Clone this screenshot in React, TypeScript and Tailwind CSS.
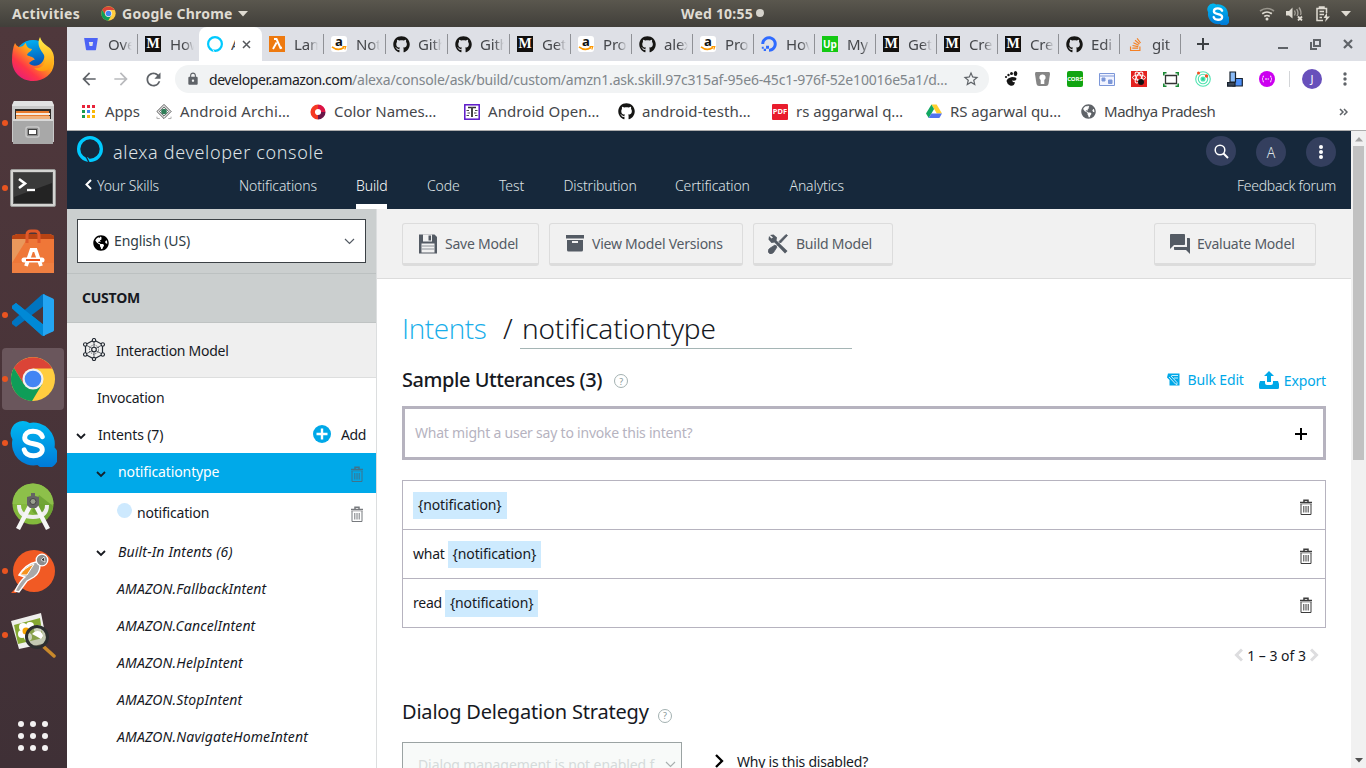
import type { ReactNode } from "react";
import { FaGithub, FaBitbucket, FaDigitalOcean, FaStackOverflow, FaGlobeAmericas } from "react-icons/fa";
import { MdQuestionAnswer, MdLock, MdStarBorder, MdArrowBack, MdArrowForward, MdRefresh } from "react-icons/md";

function ChromeLogo({ size }: { size: number }) {
  return (
    <svg width={size} height={size} viewBox="0 0 48 48">
      <circle cx="24" cy="24" r="23" fill="#ffcd40" />
      <path d="M24 13 L43.9 13 A23 23 0 0 0 4.1 12.5 L14.5 29.5 Z" fill="#db4437" />
      <path d="M4.1 12.5 A23 23 0 0 0 23 47 L33.5 29.5 L24 34 L14.5 29.5 Z" fill="#0f9d58" />
      <circle cx="24" cy="24" r="11" fill="#f1f1f1" />
      <circle cx="24" cy="24" r="8.7" fill="#4285f4" />
    </svg>
  );
}

function AlexaRing({ size, stroke, back }: { size: number; stroke: number; back: string }) {
  return (
    <svg width={size} height={size} viewBox="0 0 26 26" fill="none">
      <circle cx="13" cy="13" r={13 - stroke / 2} stroke="#00caff" strokeWidth={stroke} />
      <path d="M10.800 21 L14.500 26 L12 26.500 L9.800 21.500 Z" fill="#00caff" />
      <path d="M9.300 21 L12 26.500" stroke={back} strokeWidth="1.300" />
    </svg>
  );
}

function SkypeLogo({ size }: { size: number }) {
  return (
    <svg width={size} height={size} viewBox="0 0 48 48">
      <defs>
        <linearGradient id="sky" x1="0" y1="0" x2="0" y2="1">
          <stop offset="0" stopColor="#00b8f1" />
          <stop offset="1" stopColor="#0078d7" />
        </linearGradient>
      </defs>
      <path fill="url(#sky)" d="M13 1 A12.5 12.5 0 0 0 2.5 20 A22 22 0 0 0 28 46 A12.500 12.500 0 0 0 45.500 28 A22 22 0 0 0 20 3 A12.500 12.500 0 0 0 13 1 Z" />
      <path d="M33 17 C31 12 26 11.500 23.500 11.500 C18 11.500 15 14.500 15 18 C15 27 33 21.500 33 30.500 C33 34 29 36.500 24 36.500 C19 36.500 15.500 34 14.500 30.500" fill="none" stroke="#fff" strokeWidth="5" strokeLinecap="round" />
    </svg>
  );
}

const Firefox = () => (
  <svg width="44" height="46" viewBox="0 0 44 46">
    <defs>
      <linearGradient id="ffa" x1="1" y1="0" x2="0.1" y2="1">
        <stop offset="0" stopColor="#fff44f" />
        <stop offset=".4" stopColor="#ffa716" />
        <stop offset=".7" stopColor="#ff3647" />
        <stop offset="1" stopColor="#e31587" />
      </linearGradient>
      <linearGradient id="ffb" x1=".3" y1="0" x2=".5" y2="1">
        <stop offset="0" stopColor="#00b3f4" />
        <stop offset="1" stopColor="#0a2f9c" />
      </linearGradient>
      <linearGradient id="ffc" x1="0" y1="0" x2="0" y2="1">
        <stop offset="0" stopColor="#fff04a" />
        <stop offset="1" stopColor="#ff9a0c" />
      </linearGradient>
    </defs>
    <circle cx="22" cy="22" r="18" fill="url(#ffb)" />
    <path d="M4 7 C5 9 6 10 8 11 C10 11 11 10 12 10 C13 9 14 7 15 7 C15 10 18 13 21 13 C20 16 17 16 16 19 C19 21 22 20 24 24 C22 23 20 26 18 27 C21 31 28 31 32 25 C35 20 33 12 30 9 C40 12 44 20 43 28 C42 38 33 45 22 45 C10 45 1 36 1 24 C1 17 2 11 4 7 Z" fill="url(#ffa)" />
    <path d="M29 1 C25 9 30 14 33 19 C37 26 31 34 23 32 C31 39 43 34 43 22 C43 17 40 12 36 10 C33 8 30 5 29 1 Z" fill="url(#ffc)" />
  </svg>
);

const Files = () => (
  <svg width="44" height="46" viewBox="0 0 44 46">
    <path d="M3 1 H41 L43 5 V42 H1 V5 Z" fill="#c9c9c9" />
    <path d="M3 1 H41 L43 6 H1 Z" fill="#e2e2e2" />
    <path d="M4 9 H40 V20 H4 Z" fill="#2e2b28" />
    <path d="M5 11 H38 V19 H5 Z" fill="#e87a2b" />
    <path d="M5 13 H39 V15 H5 Z" fill="#f6e9dd" />
    <path d="M5 16 H39 V19 H5 Z" fill="#f0b27c" />
    <path d="M2 19 H42 V44 H2 Z" fill="#a8a8a8" />
    <path d="M2 19 H42 V21 H2 Z" fill="#d8d8d8" />
    <rect x="15" y="27" width="13" height="10" rx="2" fill="#8e8e8e" stroke="#c9c9c9" strokeWidth="1.500" />
    <rect x="17.500" y="29.500" width="8" height="5" fill="#fff" stroke="#444" />
  </svg>
);

const Terminal = () => (
  <svg width="46" height="38" viewBox="0 0 46 38">
    <rect x=".5" y=".5" width="45" height="37" rx="1.500" fill="#d4d4d2" stroke="#9a9a98" />
    <rect x="3.500" y="3.500" width="39" height="31" fill="#232323" stroke="#555" />
    <path d="M4 4 H42 V14 L4 28 Z" fill="#3a3a3a" />
    <path d="M9 10 L15 14.500 L9 19" fill="none" stroke="#fff" strokeWidth="2.600" />
    <path d="M17 21 H25" stroke="#fff" strokeWidth="2.300" />
  </svg>
);

const Software = () => (
  <svg width="44" height="46" viewBox="0 0 44 46">
    <path d="M1 7 L6 5 H39 L43 7 V44 H1 Z" fill="#f0803c" />
    <path d="M1 7 L6 5 H39 L43 7 V11 H1 Z" fill="#b84313" />
    <path d="M1 10 H43 V34 H1 Z" fill="#ef7738" />
    <path d="M1 10 H16 L1 34 Z" fill="#e9985c" />
    <path d="M1 34 H43 V44 H1 Z" fill="#ef7f41" />
    <path d="M16 14 V6 Q16 2 20 2 H24 Q28 2 28 6 V14" fill="none" stroke="#e0592a" strokeWidth="3" />
    <path d="M15 37 L20.500 21 H24.500 L30 37" fill="none" stroke="#fff" strokeWidth="3.800" />
    <path d="M13 31 H31" stroke="#fff" strokeWidth="5" strokeLinecap="round" />
    <path d="M15 31 H29" stroke="#e95420" strokeWidth="2" />
  </svg>
);

const VsCode = () => (
  <svg width="44" height="44" viewBox="0 0 44 44">
    <path d="M1 13 L5 10 L34 33 V43 L31 42.500 L1 15.500 Z" fill="#0089d6" />
    <path d="M1 31 L5 34 L34 12 V1 L31 1.500 L1 28.500 Z" fill="#0074c0" />
    <path d="M1 13 L5 10 L34 33 V43 L31 42.500 L12 25.500 Z" fill="#0089d6" />
    <path d="M32 1 L42 5.500 Q43 6 43 7 V37 Q43 38 42 38.500 L32 43 Z" fill="#24a5f2" />
  </svg>
);

const Studio = () => (
  <svg width="42" height="48" viewBox="0 0 42 48">
    <circle cx="21" cy="21" r="20.500" fill="#83b93c" />
    <path d="M.5 21 A20.500 20.500 0 0 1 41.500 21 Z" fill="#8dc04a" />
    <path d="M27 12 L41 23 A20 20 0 0 1 31 39 L20 28 Z" fill="#649a2e" opacity=".7" />
    <path d="M7 22 Q7 34 21 34 Q35 34 35 22" fill="none" stroke="#eee" strokeWidth="4" />
    <path d="M18 23 L6 46 M24 23 L36 46" stroke="#f5f5f5" strokeWidth="4.500" />
    <path d="M19 10 H23 V13 L27 14 V22 L24 25 H18 L15 22 V14 L19 13 Z" fill="#646464" />
    <circle cx="21" cy="18.500" r="3" fill="#99a08f" stroke="#444" />
  </svg>
);

const Postman = () => (
  <svg width="46" height="46" viewBox="0 0 46 46">
    <circle cx="24" cy="23" r="21" fill="#f15a24" />
    <path d="M1 45 L12 34 L6 45 Z" fill="#f15a24" />
    <path d="M26 14 Q16 16 9 27 L15 29 Q10 33 5 43 L9 44 L17 33 L24 29 Q30 25 30 17 Z" fill="#a8a8a8" stroke="#fff" strokeWidth="1.400" />
    <path d="M24 16 Q14 20 10 27 L17 27 Z" fill="#f7931e" stroke="#fff" />
    <circle cx="32" cy="12" r="5.800" fill="#8d8d8d" stroke="#fff" strokeWidth="1.300" />
    <path d="M34 9 L31 12 L35 14 Z" fill="#333" stroke="#fff" strokeWidth=".7" />
  </svg>
);

const Viewer = () => (
  <svg width="46" height="46" viewBox="0 0 46 46">
    <path d="M1 9 L31 1 L37 31 L9 37 Z" fill="#efefed" />
    <path d="M4 13 L30 6 L33 26 L8 32 Z" fill="#85a832" />
    <g fill="#fff">
      <circle cx="13" cy="15" r="4" /><circle cx="20" cy="14" r="4" /><circle cx="12" cy="22" r="4" />
      <circle cx="18" cy="25" r="4" /><circle cx="28" cy="17" r="4" />
    </g>
    <circle cx="16" cy="19" r="3.500" fill="#f5a400" />
    <path d="M34 35 L44 44" stroke="#c9892b" strokeWidth="3.500" strokeLinecap="round" />
    <circle cx="27" cy="25" r="10.500" fill="#8c9a6a" fillOpacity=".45" stroke="#2c2f30" strokeWidth="3" />
    <path d="M22 22 Q26 17 31 20 Q35 24 31 27 Q26 24 22 22 Z" fill="#fff" />
  </svg>
);

const MIcon = () => (
  <span className="flex h-4 w-4 shrink-0 items-center justify-center bg-[#12100e] font-['Liberation_Serif',serif] text-[14px] leading-none font-bold text-white">M</span>
);
const AmazonIcon = () => (
  <span className="flex h-4 w-4 shrink-0 items-center justify-center rounded-[3px] bg-white">
    <svg width="16" height="16" viewBox="0 0 16 16">
      <text x="4" y="10" fontSize="13" fontWeight="700" fontFamily="Open Sans, sans-serif" fill="#111">a</text>
      <path d="M1 10.800 Q7 15.500 13 11.500" fill="none" stroke="#ff9900" strokeWidth="1.700" />
      <path d="M11.500 10.600 L14.800 10.500 L13.800 13.500" fill="none" stroke="#ff9900" strokeWidth="1.100" />
    </svg>
  </span>
);
const LambdaIcon = () => (
  <svg width="16" height="16" viewBox="0 0 16 16">
    <rect width="16" height="16" fill="#ee7a10" />
    <path d="M5 3 H7.500 L11.500 12 L13 11.500 M7.600 6.500 L4 13" fill="none" stroke="#fff" strokeWidth="1.900" />
  </svg>
);
const Gh = () => <FaGithub size={17} color="#161614" className="shrink-0" />;

const leftTabs: [ReactNode, string][] = [
  [<FaBitbucket size={14} color="#4c63f5" />, "Ove"],
  [<MIcon />, "How"],
];
const rightTabs: [ReactNode, string][] = [
  [<LambdaIcon />, "Lam"],
  [<AmazonIcon />, "Not"],
  [<Gh />, "Gith"],
  [<Gh />, "Gith"],
  [<MIcon />, "Get"],
  [<AmazonIcon />, "Pro"],
  [<Gh />, "alex"],
  [<AmazonIcon />, "Pro"],
  [<FaDigitalOcean size={16} color="#2f6bff" />, "Hov"],
  [<span className="flex h-4 w-4 items-center justify-center bg-[#14c914] text-[10px] font-bold text-white">Up</span>, "My"],
  [<MIcon />, "Get"],
  [<MIcon />, "Cre"],
  [<MIcon />, "Cre"],
  [<Gh />, "Edi"],
  [<FaStackOverflow size={15} color="#f48024" />, "git"],
];

function Tab({ icon, text, wide, noRule }: { icon: ReactNode; text: string; wide?: boolean; noRule?: boolean }) {
  return (
    <div className={"flex h-[34px] shrink-0 items-center pl-[7px] " + (wide ? "w-[62px]" : "w-[61px]")}>
      <span className="flex w-4 shrink-0 justify-center">{icon}</span>
      <span className="ml-[9px] w-[24px] shrink-0 overflow-hidden text-[15px] tracking-[-0.200px] whitespace-nowrap text-[#45474b] [mask-image:linear-gradient(90deg,#000_60%,transparent)]">{text}</span>
      {!noRule && <span className="ml-auto h-5 w-px bg-[#8f9196]" />}
    </div>
  );
}

function Trash({ className }: { className?: string }) {
  return (
    <svg className={className} width="14" height="17" viewBox="0 0 14 17" fill="none" stroke="currentColor">
      <path d="M1 3.500 H13 M5 3 V1.200 H9 V3" strokeWidth="1.500" />
      <path d="M2 5 V15.500 H12 V5 M4.800 7 V13.500 M7 7 V13.500 M9.200 7 V13.500" />
      <path d="M1.500 5 H12.500" strokeOpacity=".5" />
    </svg>
  );
}

const Chevron = ({ className }: { className?: string }) => (
  <svg className={className} width="10" height="7" viewBox="0 0 10 7" fill="none" stroke="currentColor" strokeWidth="1.800">
    <path d="M1 1 L5 5 L9 1" />
  </svg>
);

const Help = () => (
  <span className="flex h-[14px] w-[14px] items-center justify-center rounded-full border border-[#a3b1b1] text-[9px] leading-none text-[#879596]">?</span>
);

const dockHeights = { a: "h-[64px]", b: "h-[66px]", c: "h-[62px]" };

function DockItem({ h = "a", dot, active, children }: { h?: keyof typeof dockHeights; dot?: boolean; active?: boolean; children: ReactNode }) {
  return (
    <div className={"relative flex w-full shrink-0 items-center justify-center " + dockHeights[h]}>
      {dot && <span className="absolute top-1/2 left-[2px] z-10 h-[6px] w-[6px] -translate-y-1/2 rounded-full bg-[#e95420]" />}
      <div className={"flex h-[62px] w-[62px] items-center justify-center " + (active ? "rounded-[4px] bg-[#6a565c]" : "")}>{children}</div>
    </div>
  );
}

const bookmarks: [ReactNode, string, string, string][] = [
  [<svg width="17" height="17" viewBox="0 0 17 17" fill="none"><path d="M8.500 1 L16 8.500 L8.500 16 L1 8.500 Z M8.500 3.500 L13.500 8.500 L8.500 13.500 L3.500 8.500 Z" stroke="#444" /><circle cx="8.500" cy="8.500" r="3" fill="#2f7d57" /><path d="M1 14 V16 H4 M16 14 V16 H13" stroke="#aaa" /></svg>, "Android Archi…", "w-[154px]", "tracking-[0.160px]"],
  [<svg width="16" height="16" viewBox="0 0 16 16" fill="none" strokeWidth="4.500"><path d="M8 2.700 A5.300 5.300 0 1 0 8 13.300" stroke="#f53a24" /><path d="M8 2.700 A5.300 5.300 0 0 1 13.300 8" stroke="#dc1445" /><path d="M13.300 8 A5.300 5.300 0 0 1 8 13.300" stroke="#6b1648" /></svg>, "Color Names…", "w-[154px]", "tracking-[-0.050px]"],
  [<svg width="16" height="16" viewBox="0 0 16 16" fill="none"><rect x=".8" y=".8" width="14.400" height="14.400" stroke="#5a16c9" strokeWidth="1.500" /><path d="M4 3.500 H12" stroke="#333" strokeWidth="1.500" /><path d="M7.500 3 V13 M8.500 3 V13 M2.500 6.500 H5 M3.500 9 H6 M2.500 11.500 H5 M11 6.500 H13.500 M10 9 H12.500 M11 11.500 H13.500" stroke="#444" /></svg>, "Android Open…", "w-[154px]", "tracking-[0.070px]"],
  [<Gh />, "android-testh…", "w-[154px]", "tracking-[0.100px]"],
  [<span className="flex h-4 w-4 items-center justify-center rounded-[1px] bg-[#e91c2c] text-[7.500px] font-bold text-white">PDF</span>, "rs aggarwal q…", "w-[154px]", "tracking-[-0.050px]"],
  [<svg width="17" height="15" viewBox="0 0 17 15"><path d="M5.800 0 H11.300 L17 9.700 H11.500 Z" fill="#ffcf2e" /><path d="M5.800 0 L8.600 4.800 L2.900 14.500 L0 9.700 Z" fill="#11a861" /><path d="M5.700 9.700 H17 L14.200 14.500 H2.900 Z" fill="#4f72f0" /></svg>, "RS agarwal qu…", "w-[154px]", "tracking-[-0.070px]"],
  [<FaGlobeAmericas size={15} color="#5f6368" />, "Madhya Pradesh", "w-[259px]", "tracking-[-0.480px]"],
];

const nav: [string, string][] = [
  ["Notifications", "w-[117px]"],
  ["Build", "w-[71px]"],
  ["Code", "w-[72px]"],
  ["Test", "w-[64.500px]"],
  ["Distribution", "w-[111.500px]"],
  ["Certification", "w-[114.500px]"],
  ["Analytics", "w-[60px]"],
];

const amazonIntents = ["FallbackIntent", "CancelIntent", "HelpIntent", "StopIntent", "NavigateHomeIntent"];

function ToolButton({ className, icon, children }: { className: string; icon: ReactNode; children: ReactNode }) {
  return (
    <button className={"flex h-[43px] items-center rounded-[3px] border border-b-[3px] border-[#dcdcdc] bg-[#f1f1f1] text-[14px] tracking-[-0.230px] whitespace-nowrap text-[#545b64] " + className}>
      {icon}
      {children}
    </button>
  );
}

function Utterance({ lead }: { lead: string }) {
  return (
    <div className="flex h-[49px] items-center border-b border-[#b6b3bf] pr-[12px] pl-[10px] text-[14px] tracking-[-0.120px]">
      {lead && <span className="mr-[3px] -mt-[2px] tracking-[-0.250px]">{lead}</span>}
      <span className="flex h-[27px] items-center bg-[#cdeafe] px-[5px] pb-[2px]">{"{notification}"}</span>
      <Trash className="mt-[5px] ml-auto text-[#3c3c3c]" />
    </div>
  );
}

export default function App() {
  return (
    <div className="flex h-[768px] w-[1366px] flex-col overflow-hidden bg-white font-['Noto_Sans',sans-serif] text-[#16191f]">
      <header className="flex h-[27px] shrink-0 items-center bg-gradient-to-b from-[#5a574e] to-[#413f3a] text-[14px] font-bold text-[#dfdbd2]">
        <span className="ml-[12px] w-[89px] tracking-[0.300px]">Activities</span>
        <ChromeLogo size={15} />
        <span className="ml-[6px] w-[112px] tracking-[0.250px]">Google Chrome</span>
        <svg className="ml-[4px]" width="10" height="6"><path d="M0 0 H10 L5 5.500 Z" fill="#dfdbd2" /></svg>
        <span className="-mt-px ml-[433px] w-[74px] tracking-[0.200px]">Wed 10:55</span>
        <span className="-mt-px ml-[1px] h-2 w-2 rounded-full bg-[#d5d2cb]" />
        <span className="ml-[443px] flex"><SkypeLogo size={22} /></span>
        <svg className="ml-[30px]" width="16" height="14" viewBox="0 0 16 14" fill="none" stroke="#dfdbd2" strokeWidth="1.700"><path d="M1 4 Q8 -1 15 4" opacity=".5" /><path d="M3.200 6.800 Q8 3.200 12.800 6.800 M5.300 9.500 Q8 7.500 10.700 9.500" /><circle cx="8" cy="12" r="1.500" fill="#dfdbd2" stroke="none" /></svg>
        <svg className="ml-[11px]" width="17" height="15" viewBox="0 0 17 15" fill="none" stroke="#dfdbd2" strokeWidth="1.400"><path d="M0 5 H3 L6.500 1.500 V12.500 L3 9.500 H0 Z" fill="#dfdbd2" stroke="none" /><path d="M8.500 4.500 Q10 7 8.500 9.500 M10.700 3 Q13 7 11 10 M13 1.500 Q16 6 14.500 9" opacity=".6" /><path d="M12 10.500 L16 14.500 M16 10.500 L12 14.500" strokeWidth="1.800" /></svg>
        <svg className="ml-[13px]" width="15" height="16" viewBox="0 0 15 16" fill="none" stroke="#dfdbd2" strokeWidth="1.500"><path d="M10.500 7 V2.500 H1 V14.500 H7 M3.500 2 V1 H8 V2 M3.500 5.500 H8 M3.500 8.500 H8 M3.500 11.500 H6" /><path d="M11 6.500 L7.500 12 H10 L9 16 L14 10.500 H11 Z" fill="#dfdbd2" stroke="none" /></svg>
        <svg className="ml-[10px]" width="10" height="6"><path d="M0 0 H10 L5 5.500 Z" fill="#dfdbd2" /></svg>
      </header>

      <div className="flex min-h-0 flex-1">
        <aside className="flex w-[67px] shrink-0 flex-col items-center bg-gradient-to-b from-[#4f383c] via-[#493439] to-[#3f3036] pr-px">
          <DockItem><Firefox /></DockItem>
          <DockItem dot><Files /></DockItem>
          <DockItem h="b" dot><Terminal /></DockItem>
          <DockItem h="c"><Software /></DockItem>
          <DockItem dot><VsCode /></DockItem>
          <DockItem dot active><ChromeLogo size={46} /></DockItem>
          <DockItem dot><SkypeLogo size={47} /></DockItem>
          <DockItem><Studio /></DockItem>
          <DockItem dot><Postman /></DockItem>
          <DockItem dot><Viewer /></DockItem>
          <div className="mt-[54px] grid grid-cols-3 gap-[6px]">
            {Array.from({ length: 9 }, (_, i) => <span key={i} className="h-[6px] w-[6px] rounded-full bg-[#f3f1f1]" />)}
          </div>
        </aside>

        <div className="flex w-[1299px] shrink-0 flex-col">
          <div className="flex h-[34px] shrink-0 items-center bg-[#dee0e6] pl-[9px]">
            {leftTabs.map(([icon, text], i) => <Tab key={i} icon={icon} text={text} wide={i === 0} noRule={i === 1} />)}
            <div className="flex h-[34px] w-[63px] shrink-0 items-center rounded-t-[8px] bg-white pl-[8px]">
              <AlexaRing size={16} stroke={3.600} back="#fff" />
              <span className="ml-[8px] w-[4px] overflow-hidden text-[15px] text-[#45474b]">A</span>
              <svg className="ml-[7px]" width="9" height="9" viewBox="0 0 9 9" stroke="#55585c" strokeWidth="1.500"><path d="M1 1 L8 8 M8 1 L1 8" /></svg>
            </div>
            {rightTabs.map(([icon, text], i) => <Tab key={i} icon={icon} text={text} wide={i < 4} />)}
            <svg className="ml-[16px] shrink-0" width="12" height="12" stroke="#3c4043" strokeWidth="2"><path d="M6 0 V12 M0 6 H12" /></svg>
            <svg className="ml-[69px] shrink-0" width="10" height="12" stroke="#5f6368" strokeWidth="2"><path d="M0 10 H10" /></svg>
            <svg className="ml-[22px] shrink-0" width="11" height="11" fill="none" stroke="#5f6368" strokeWidth="2"><path d="M4 1 H10 V7 H4 Z M1 3 V10 H7" /></svg>
            <svg className="ml-[22px] shrink-0" width="10" height="10" stroke="#5f6368" strokeWidth="2.200"><path d="M1 1 L9 9 M9 1 L1 9" /></svg>
          </div>

          <div className="flex h-[36px] shrink-0 items-center bg-white pl-[12px] text-[#5f6368]">
            <MdArrowBack size={20} className="shrink-0" />
            <MdArrowForward size={20} className="ml-[12px] shrink-0 text-[#b9babd]" />
            <MdRefresh size={21} className="ml-[12px] shrink-0" />
            <div className="ml-[11px] flex h-[28px] w-[814px] shrink-0 items-center rounded-full bg-[#f1f3f4] pl-[11px] text-[14px] whitespace-nowrap">
              <MdLock size={14} className="shrink-0" />
              <span className="ml-[9px] w-[143px] tracking-[-0.430px] text-[#202124]">developer.amazon.com</span>
              <span className="w-[596px] tracking-[-0.190px] text-[#80868b]">/alexa/console/ask/build/custom/amzn1.ask.skill.97c315af-95e6-45c1-976f-52e10016e5a1/d…</span>
              <MdStarBorder size={18} className="ml-[14px] shrink-0" />
            </div>
            <svg className="ml-[15px] shrink-0" width="14" height="16" viewBox="0 0 14 16" fill="#151515"><ellipse cx="11.500" cy="2.500" rx="1.800" ry="2.500" /><circle cx="7.500" cy="2.500" r="1.500" /><circle cx="4.500" cy="4" r="1.200" /><circle cx="2" cy="6" r="1.100" /><path d="M8 6 Q14 6 12 9 Q11 10 8 9.500 Q9 12 11 11 Q10 16 6 14.500 Q3 13 2.500 10 Q3 7 8 6 Z" /></svg>
            <svg className="ml-[17px] shrink-0" width="15" height="14" viewBox="0 0 15 14"><path d="M1 0 H14 Q15 0 15 2 L13.500 12 Q13 14 11 14 H4 Q2 14 1.500 12 L0 2 Q0 0 1 0 Z" fill="#858585" /><path d="M7.500 2.500 A3 3 0 0 1 9.300 8 V12 H5.700 V8 A3 3 0 0 1 7.500 2.500 Z" fill="#fff" /></svg>
            <span className="ml-[17px] flex h-4 w-4 shrink-0 items-center justify-center rounded-[2px] bg-[#11a511] text-[6px] font-bold text-white">CORS</span>
            <svg className="ml-[16px] shrink-0" width="16" height="13" viewBox="0 0 16 13" fill="#f2f4ff" stroke="#7c97d8"><path d="M.5 .5 H15.500 V12.500 H.5 Z M.5 3 H15.500" /><path d="M3 5 H6 V8 H3 Z M9.500 7 H13 V10.500 H9.500 Z" fill="#7c97d8" /></svg>
            <svg className="ml-[16px] shrink-0" width="16" height="16" viewBox="0 0 16 16"><rect width="16" height="16" fill="#e3221f" /><g fill="none" stroke="#fff"><ellipse cx="8" cy="6.500" rx="6.500" ry="2.500" /><ellipse cx="8" cy="6.500" rx="6" ry="2.500" transform="rotate(60 8 6.500)" /><ellipse cx="8" cy="6.500" rx="6" ry="2.500" transform="rotate(120 8 6.500)" /></g><circle cx="10" cy="11" r="3" fill="#111" /></svg>
            <svg className="ml-[16px] shrink-0" width="16" height="15" viewBox="0 0 16 15" fill="none"><path d="M2.500 3.500 H13.500 V11.500 H2.500 Z" stroke="#333" strokeWidth="1.300" /><path d="M.8 3.500 V.8 H3.500 M12.500 .8 H15.200 V3.500 M.8 11.500 V14.200 H3.500 M12.500 14.200 H15.200 V11.500" stroke="#1b8a35" strokeWidth="1.600" /></svg>
            <svg className="ml-[16px] shrink-0" width="16" height="16" viewBox="0 0 16 16" fill="none" stroke="#4fe3b0" strokeWidth="1.100"><circle cx="8" cy="8" r="7.300" /><circle cx="8" cy="8" r="4.700" /><circle cx="8" cy="8" r="2" fill="#2ed19a" /><circle cx="3.500" cy="2" r="1.500" fill="#f55022" stroke="none" /><circle cx="11.500" cy="5" r="1.700" fill="#f55022" stroke="none" /></svg>
            <svg className="ml-[16px] shrink-0" width="16" height="16" viewBox="0 0 16 16" stroke="#18222e" strokeWidth="1.200"><path d="M6 7.500 H15.300 V15 H6 Z" fill="#4d8ff7" /><path d="M3 1 H8.500 V11 H3 Z" fill="#8cbcf7" /><path d="M.6 11.500 H8 V15.200 H.6 Z" fill="#3a4658" /></svg>
            <svg className="ml-[16px] shrink-0" width="16" height="16" viewBox="0 0 16 16"><circle cx="8" cy="8" r="8" fill="#cc00f0" /><path d="M5 5 Q3.500 5 4 7 L3 8 L4 9 Q3.500 11 5 11 M11 5 Q12.500 5 12 7 L13 8 L12 9 Q12.500 11 11 11 M6 8 H10" fill="none" stroke="#fff" strokeDasharray="2 .6" /></svg>
            <span className="ml-[14px] h-4 w-px shrink-0 bg-[#d3d5d8]" />
            <span className="ml-[12px] flex h-5 w-5 shrink-0 items-center justify-center rounded-full bg-[#6850bb] text-[11px] text-white">J</span>
            <svg className="ml-[21px] shrink-0" width="4" height="14" fill="#5f6368"><circle cx="2" cy="2" r="1.700" /><circle cx="2" cy="7" r="1.700" /><circle cx="2" cy="12" r="1.700" /></svg>
          </div>

          <div className="flex h-[34px] shrink-0 items-center border-b border-[#adadad] bg-white pb-[4px] pl-[15px] text-[15px] text-[#45474b]">
            <svg width="13" height="13" viewBox="0 0 13 13" className="shrink-0">
              <path d="M0 0h3v3h-3z M5 0h3v3h-3z M10 0h3v3h-3z" fill="#e8233a" />
              <path d="M0 5h3v3h-3z M0 10h3v3h-3z" fill="#1a9c4e" /><path d="M5 5h3v3h-3z" fill="#4285f4" />
              <path d="M10 5h3v3h-3z M5 10h3v3h-3z M10 10h3v3h-3z" fill="#f9b806" />
            </svg>
            <span className="ml-[10px] w-[51px] tracking-[-0.100px]">Apps</span>
            {bookmarks.map(([icon, text, w, tr], i) => (
              <div key={i} className={"flex shrink-0 items-center whitespace-nowrap " + w}>
                <span className="flex w-4 shrink-0 justify-center">{icon}</span>
                <span className={"ml-[8px] " + tr}>{text}</span>
              </div>
            ))}
            <svg width="9" height="8" viewBox="0 0 9 8" fill="none" stroke="#5f6368" strokeWidth="1.500" className="shrink-0"><path d="M1 1 L4 4 L1 7 M5 1 L8 4 L5 7" /></svg>
          </div>

          <div className="flex min-h-0 flex-1">
            <div className="flex w-[1284px] shrink-0 flex-col">
              <div className="flex h-[78px] shrink-0 flex-col bg-[#16283b] text-[#dfe3e6]">
                <div className="flex h-[42px] items-center pl-[10px]">
                  <span className="-mt-[6px]"><AlexaRing size={26} stroke={3.300} back="#16283b" /></span>
                  <span className="ml-[10px] w-[212px] text-[18px] font-light tracking-[0.650px] whitespace-nowrap">alexa developer console</span>
                  <span className="-mt-[2px] ml-[881px] flex h-[30px] w-[30px] items-center justify-center rounded-full bg-[#343f5e]">
                    <svg width="15" height="15" viewBox="0 0 15 15" fill="none" stroke="#fff" strokeWidth="1.500"><circle cx="6" cy="6" r="4.800" /><path d="M9.500 9.500 L14 14" strokeWidth="2" /></svg>
                  </span>
                  <span className="ml-[20px] flex h-[30px] w-[30px] items-center justify-center rounded-full bg-[#343f5e] text-[14px] font-light">A</span>
                  <span className="ml-[20px] flex h-[30px] w-[30px] items-center justify-center rounded-full bg-[#343f5e]">
                    <svg width="4" height="14" fill="#fff"><circle cx="2" cy="2" r="2" /><circle cx="2" cy="7" r="2" /><circle cx="2" cy="12" r="2" /></svg>
                  </span>
                </div>
                <div className="flex h-[36px] items-start pr-[15px] pl-[18px] text-[14px] leading-[25px] font-light whitespace-nowrap">
                  <svg className="mt-[6px]" width="7" height="11" viewBox="0 0 7 11" fill="none" stroke="#fff" strokeWidth="2"><path d="M6 1 L1.500 5.500 L6 10" /></svg>
                  <span className="ml-[5px] w-[142px] tracking-[-0.140px]">Your Skills</span>
                  {nav.map(([label, w], i) => (
                    <div key={label} className={"h-[36px] shrink-0 tracking-[-0.120px] " + w}>
                      <div className={i === 1 ? "h-[36px] w-[31px] border-b-[5px] border-white text-white" : ""}>{label}</div>
                    </div>
                  ))}
                  <span className="ml-auto tracking-[-0.290px]">Feedback forum</span>
                </div>
              </div>

              <div className="flex min-h-0 flex-1">
                <nav className="flex w-[310px] shrink-0 flex-col border-r border-[#dcdedf] bg-white text-[14px] whitespace-nowrap">
                  <div className="h-[65px] shrink-0 border-b border-[#bcc1c1] bg-[#cbcfcf] px-[10px] pt-[10px]">
                    <div className="flex h-[44px] items-center border border-[#3b4145] bg-white pr-[10px] pl-[15px] text-[#2f3b44]">
                      <FaGlobeAmericas size={16} color="#000" className="mt-[4px]" />
                      <span className="-mt-px ml-[5px] tracking-[-0.130px]">English (US)</span>
                      <svg className="ml-auto" width="11" height="7" viewBox="0 0 11 7" fill="none" stroke="#545b64" strokeWidth="1.200"><path d="M1 1 L5.500 5.500 L10 1" /></svg>
                    </div>
                  </div>
                  <div className="flex h-[49px] shrink-0 items-center border-b border-[#bfc3c3] bg-[#cbcfcf] pb-px pl-[15px] font-bold tracking-[-0.230px]">CUSTOM</div>
                  <div className="flex h-[55px] shrink-0 items-center border-b border-[#dddede] bg-[#efefef] pb-px pl-[16px]">
                    <svg width="22" height="23" viewBox="0 0 22 23" fill="none" stroke="#222831">
                      <path d="M11 2 L19.500 6.500 V16.500 L11 21 L2.500 16.500 V6.500 Z" strokeWidth="1.200" />
                      <path d="M11 3 V20 M3 7 L19 16 M19 7 L3 16" strokeWidth=".7" />
                      <path d="M11 6.500 L15.500 9 V14 L11 16.500 L6.500 14 V9 Z" strokeWidth=".6" strokeDasharray="1.500 1" />
                      <g fill="#efefef" strokeWidth="1.100"><circle cx="11" cy="2.200" r="1.700" /><circle cx="19.800" cy="6.500" r="1.700" /><circle cx="19.800" cy="16.500" r="1.700" /><circle cx="11" cy="21" r="1.600" /><circle cx="2.200" cy="16.500" r="1.700" /><circle cx="2.200" cy="6.500" r="1.700" /><circle cx="11" cy="11.500" r="2.300" /></g>
                    </svg>
                    <span className="mt-[2px] ml-[11px] tracking-[-0.270px]">Interaction Model</span>
                  </div>
                  <div className="flex h-[38px] shrink-0 items-center pl-[30px] tracking-[-0.200px]">Invocation</div>
                  <div className="flex h-[37px] shrink-0 items-center pr-[10px] pb-px pl-[9px]">
                    <Chevron className="mt-[4px]" />
                    <span className="ml-[12px] tracking-[-0.140px]">Intents (7)</span>
                    <svg className="ml-auto" width="18" height="18" viewBox="0 0 18 18"><circle cx="9" cy="9" r="9" fill="#00a8e8" /><path d="M9 3.500 V14.500 M3.500 9 H14.500" stroke="#fff" strokeWidth="2.400" /></svg>
                    <span className="mt-[1px] ml-[10px] tracking-[-0.400px]">Add</span>
                  </div>
                  <div className="flex h-[40px] shrink-0 items-center bg-[#00a9e9] pr-[12px] pb-[3px] pl-[29px] text-white">
                    <Chevron className="mt-[6px] text-[#14212b]" />
                    <span className="ml-[12px] tracking-[-0.120px]">notificationtype</span>
                    <Trash className="mt-[6px] ml-auto text-[#3f738c]" />
                  </div>
                  <div className="flex h-[40px] shrink-0 items-center pr-[12px] pb-[2px] pl-[50px]">
                    <span className="-mt-[4px] h-[15px] w-[15px] rounded-full bg-[#cde9fe]" />
                    <span className="ml-[5px] tracking-[-0.200px]">notification</span>
                    <Trash className="mt-[5px] ml-auto text-[#777a7e]" />
                  </div>
                  <div className="flex h-[38px] shrink-0 items-center pb-[2px] pl-[29px]">
                    <Chevron className="mt-[4px]" />
                    <span className="ml-[12px] tracking-[0.150px] italic">Built-In Intents (6)</span>
                  </div>
                  {amazonIntents.map((n) => (
                    <div key={n} className="flex h-[37px] shrink-0 items-center pb-[2px] pl-[50px] tracking-[0.130px] italic">AMAZON.{n}</div>
                  ))}
                </nav>

                <main className="flex w-[974px] shrink-0 flex-col overflow-hidden">
                  <div className="flex h-[70px] shrink-0 border-b border-[#dcdcdc] bg-[#f1f1f1] pt-[14px] pr-[35px] pl-[25px]">
                    <ToolButton className="w-[137px] pl-[15px]" icon={
                      <svg className="mr-[7px]" width="20" height="20" viewBox="0 0 20 20"><path d="M1 0.500 H16.500 L19 3 V19.500 H1 Z" fill="#545b64" /><path d="M5 .5 H14 V7.500 H5 Z M3.500 9.500 H16.500 V18.500 H3.500 Z" fill="#f1f1f1" /><path d="M10.500 1.500 H13 V6.500 H10.500 Z" fill="#545b64" /><path d="M3.500 12 H16.500 M3.500 15 H16.500" stroke="#8b9096" /></svg>
                    }>Save Model</ToolButton>
                    <ToolButton className="ml-[10px] w-[194px] pl-[16px]" icon={
                      <svg className="mr-[8px]" width="18" height="17" viewBox="0 0 18 17" fill="#545b64"><path d="M0 0 H18 V3.500 H0 Z" /><path fillRule="evenodd" d="M1 5 H17 V15 Q17 16.500 15.500 16.500 H2.500 Q1 16.500 1 15 Z M6 6 V8 H12 V6 Z" /></svg>
                    }>View Model Versions</ToolButton>
                    <ToolButton className="ml-[10px] w-[140px] pl-[14px]" icon={
                      <svg className="mr-[8px]" width="20" height="20" viewBox="0 0 20 20"><path d="M2 1 L5.500 0.500 L9 3.500 L8.500 6.500 L19.500 17 L17 19.500 L6.500 8.500 L3.500 9 L.5 5.500 L1 2 L3.500 4.500 L5 3.500 Z" fill="#545b64" /><path d="M19.500 1.500 L18 .5 L11 7.500 L12.500 9 Z M7 11 L9 13 L5.500 18.500 Q3 21 1 19 Q-1 16.500 1.500 14.500 Z M8 12.500 L13 7.500" fill="#545b64" stroke="#545b64" strokeWidth=".8" /></svg>
                    }>Build Model</ToolButton>
                    <ToolButton className="ml-auto w-[162px] pl-[14px]" icon={<MdQuestionAnswer size={24} className="mr-[5px] -ml-[1px]" />}>Evaluate Model</ToolButton>
                  </div>

                  <div className="flex flex-col px-[25px]">
                    <div className="mt-[29px] flex h-[41px] text-[28px] leading-[41px] font-light whitespace-nowrap">
                      <span className="w-[101px] font-['Open_Sans',sans-serif] tracking-[-0.400px] text-[#18aeea]">Intents</span>
                      <span className="w-[17px]">/</span>
                      <span className="h-[41px] w-[332px] border-b border-[#a5b5b5] pl-[2px] tracking-[-0.200px]">notificationtype</span>
                    </div>
                    <div className="mt-[15px] flex h-[32px] items-center">
                      <span className="text-[20px] font-medium tracking-[-0.450px]">Sample Utterances (3)</span>
                      <span className="mt-[2px] ml-[12px]"><Help /></span>
                      <div className="ml-auto flex items-center pb-px text-[14px] tracking-[-0.150px] text-[#00a8e8]">
                        <svg width="13" height="13" viewBox="0 0 13 13"><path d="M1 .5 H12.500 V12.500 H2.500 V7 L0 4.500 Z" fill="#00a8e8" /><path d="M2 4 L8.500 11 L10 11.500 L10 9.500 L4 3 M4.500 2.500 H11 M7 5 H11" stroke="#fff" strokeWidth=".8" fill="none" /></svg>
                        <span className="-mt-px ml-[8px]">Bulk Edit</span>
                        <svg className="ml-[15px]" width="20" height="18" viewBox="0 0 20 18" fill="#00a8e8"><path d="M10 0 L15 5 H12 V11 H8 V5 H5 Z" /><path d="M1 10 H6 V12 Q6 14 8 14 H12 Q14 14 14 12 V10 H19 L20 13 V16.500 Q20 18 18.500 18 H1.500 Q0 18 0 16.500 V13 Z" /></svg>
                        <span className="mt-px ml-[5px]">Export</span>
                      </div>
                    </div>
                    <div className="mt-[10px] flex h-[54px] items-center border-[3px] border-[#b6b3bf] pr-[16px] pb-px pl-[10px] text-[14px] tracking-[-0.220px] text-[#b6b3bf]">
                      What might a user say to invoke this intent?
                      <svg className="mt-[3px] ml-auto" width="12" height="12" stroke="#000" strokeWidth="2"><path d="M6 0 V12 M0 6 H12" /></svg>
                    </div>
                    <div className="mt-[20px] border border-b-0 border-[#b6b3bf]">
                      {["", "what", "read"].map((lead) => <Utterance key={lead} lead={lead} />)}
                    </div>
                    <div className="mt-[15px] flex h-[24px] items-center justify-end pr-[7px] text-[14px] tracking-[0px]">
                      <svg className="mr-[4px]" width="9" height="14" viewBox="0 0 9 14" fill="none" stroke="#dddddf" strokeWidth="3"><path d="M8 1.500 L2.500 7 L8 12.500" /></svg>
                      1 – 3 of 3
                      <svg className="ml-[4px]" width="9" height="14" viewBox="0 0 9 14" fill="none" stroke="#dddddf" strokeWidth="3"><path d="M1 1.500 L6.500 7 L1 12.500" /></svg>
                    </div>
                    <div className="mt-[29px] flex h-[32px] items-center">
                      <span className="w-[244px] text-[20px] tracking-[-0.200px] whitespace-nowrap">Dialog Delegation Strategy</span>
                      <span className="mt-[7px] ml-[12px]"><Help /></span>
                    </div>
                    <div className="mt-[14px] flex items-start text-[14px] whitespace-nowrap">
                      <div className="flex h-[44px] w-[280px] shrink-0 items-center border border-[#9ba3a3] bg-[#f8faf9] pr-[10px] pl-[15px] text-[#d5dbdb]">
                        <span className="tracking-[-0.100px]">Dialog management is not enabled f…</span>
                        <svg className="ml-auto shrink-0" width="11" height="7" viewBox="0 0 11 7" fill="none" stroke="#a9afaf" strokeWidth="1.200"><path d="M1 1 L5.500 5.500 L10 1" /></svg>
                      </div>
                      <svg className="mt-[12px] ml-[33px]" width="9" height="14" viewBox="0 0 9 14" fill="none" stroke="#000" strokeWidth="2.300"><path d="M1 1 L7 7 L1 13" /></svg>
                      <span className="mt-[9px] ml-[13px] tracking-[-0.220px]">Why is this disabled?</span>
                    </div>
                  </div>
                </main>
              </div>
            </div>
            <div className="flex w-[15px] shrink-0 flex-col items-center bg-[#f1f1f1]">
              <svg className="mt-[6px]" width="8" height="5"><path d="M0 4.500 H8 L4 0 Z" fill="#a3a3a3" /></svg>
              <span className="mt-[4px] h-[314px] w-[11px] bg-[#c1c1c1]" />
              <svg className="mt-auto mb-[5px]" width="8" height="5"><path d="M0 0 H8 L4 4.500 Z" fill="#505050" /></svg>
            </div>
          </div>
        </div>
      </div>
    </div>
  );
}
